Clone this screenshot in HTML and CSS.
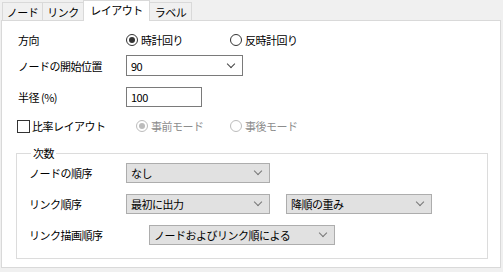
FILE: index.html
```html
<!DOCTYPE html>
<html lang="ja">
<head>
<meta charset="utf-8">
<link rel="stylesheet" href="styles.css">
</head>
<body>
<div class="window">
  <div class="tabs">
    <div class="tab t1">ノード</div>
    <div class="tab t2">リンク</div>
    <div class="tab t3 active">レイアウト</div>
    <div class="tab t4">ラベル</div>
  </div>
  <div class="panel">
    <div class="row r1">
      <span class="label">方向</span>
      <label class="opt o1"><span class="radio on"></span>時計回り</label>
      <label class="opt"><span class="radio"></span>反時計回り</label>
    </div>
    <div class="row r2">
      <span class="label">ノードの開始位置</span>
      <div class="select white s-start"><span>90</span><i class="chev"></i></div>
    </div>
    <div class="row r3">
      <span class="label">半径 (%)</span>
      <div class="input">100</div>
    </div>
    <div class="row r4">
      <label class="check"><span class="box"></span>比率レイアウト</label>
      <label class="opt dis o2"><span class="radio on"></span>事前モード</label>
      <label class="opt dis"><span class="radio"></span>事後モード</label>
    </div>
    <fieldset class="group">
      <legend>次数</legend>
      <div class="grow">
        <span class="glabel">ノードの順序</span>
        <div class="select gray s-a"><span>なし</span><i class="chev"></i></div>
      </div>
      <div class="grow">
        <span class="glabel">リンク順序</span>
        <div class="select gray s-a"><span>最初に出力</span><i class="chev"></i></div>
        <div class="select gray s-b"><span>降順の重み</span><i class="chev"></i></div>
      </div>
      <div class="grow">
        <span class="glabel">リンク描画順序</span>
        <div class="select gray s-c"><span>ノードおよびリンク順による</span><i class="chev"></i></div>
      </div>
    </fieldset>
  </div>
</div>
</body>
</html>
```

FILE: styles.css
```css
* { box-sizing: border-box; }
html, body {
  margin: 0;
  padding: 0;
  background: #f0f0f0;
}
body {
  width: 503px;
  height: 272px;
  overflow: hidden;
  font-family: "Noto Sans CJK JP", "Noto Sans", sans-serif;
  font-size: 11px;
  letter-spacing: -0.5px;
  color: #000;
}
.window {
  padding-left: 1px;
}
.tabs {
  display: flex;
  height: 20px;
  padding-left: 1px;
  align-items: flex-end;
  position: relative;
  z-index: 2;
}
.tab {
  height: 18px;
  border: 1px solid #d9d9d9;
  border-bottom: none;
  background: #f0f0f0;
  display: flex;
  align-items: center;
  justify-content: center;
  line-height: 1;
  padding-top: 1px;
}
.tab + .tab { border-left: none; }
.t1 { width: 41px; }
.t2 { width: 41px; }
.t3 { width: 66px; }
.t4 { width: 42px; }
.tab.active {
  height: 21px;
  margin-bottom: -1px;
  background: #fff;
  border-left: 1px solid #d9d9d9;
  margin-left: -1px;
  width: 67px;
  padding-top: 0;
  padding-bottom: 2px;
}
.tab.active + .tab { border-left: none; }
.panel {
  width: 500px;
  height: 248px;
  background: #fff;
  border: 1px solid #d9d9d9;
  padding: 9px 0 0 16px;
}
.row {
  display: flex;
  align-items: center;
  height: 20px;
}
.label {
  width: 108px;
  flex: none;
}
.r2 { margin-top: 5px; height: 21px; }
.r3 { margin-top: 11px; }
.r4 { margin-top: 9px; }
.opt {
  display: flex;
  align-items: center;
  gap: 3px;
}
.o1 { width: 104px; }
.o2 { width: 94px; margin-left: 26px; }
.opt.dis { color: #8d8d8d; }
.radio {
  width: 12px;
  height: 12px;
  border: 1px solid #333;
  border-radius: 50%;
  background: #fff;
  display: flex;
  align-items: center;
  justify-content: center;
  flex: none;
}
.radio.on::after {
  content: "";
  width: 6px;
  height: 6px;
  border-radius: 50%;
  background: #333;
}
.dis .radio { border-color: #bcbcbc; }
.dis .radio.on::after { background: #bcbcbc; }
.check {
  display: flex;
  align-items: center;
  gap: 2px;
  margin-left: -1px;
  width: 93px;
}
.box {
  width: 13px;
  height: 13px;
  border: 1px solid #333;
  background: #fff;
  flex: none;
}
.select {
  display: flex;
  align-items: center;
  justify-content: space-between;
  height: 100%;
  padding: 0 8px 0 4px;
  border: 1px solid #7a7a7a;
}
.select.white { background: #fff; }
.select.gray {
  background: #e1e1e1;
  border-color: #adadad;
}
.s-start { width: 117px; }
.input {
  width: 76px;
  height: 20px;
  border: 1px solid #7a7a7a;
  padding-left: 4px;
  display: flex;
  align-items: center;
}
.chev {
  width: 6px;
  height: 6px;
  border-right: 1px solid #444;
  border-bottom: 1px solid #444;
  transform: rotate(45deg);
  margin-top: -4px;
}
.gray .chev { border-color: #777; }
.group {
  margin: 10px 0 0 -2px;
  width: 472px;
  height: 113px;
  border: 1px solid #dcdcdc;
  padding: 3px 0 0 12px;
}
.group legend {
  padding: 0 2px;
  margin-left: 2px;
  line-height: 14px;
}
.grow {
  display: flex;
  align-items: center;
  height: 20px;
  margin-bottom: 11px;
}
.glabel { width: 97px; flex: none; }
.s-a { width: 144px; }
.s-b { width: 146px; margin-left: 16px; }
.s-c { width: 186px; margin-left: 23px; }
```
